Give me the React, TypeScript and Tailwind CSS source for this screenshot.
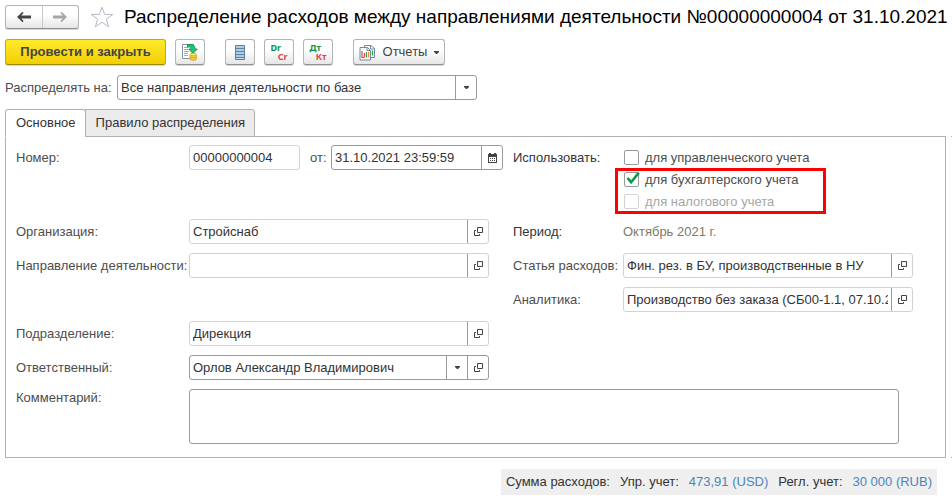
import { useState, type ReactNode } from "react";

// ─── Форма документа «Распределение расходов» ───

const TOOL_BUTTON =
  "flex h-[26px] items-center justify-center rounded-[3px] border border-[#b4b4b4] border-b-[#8f8f8f] bg-linear-to-b from-white from-40% to-[#e6e6e6] shadow-[0_1px_0_#d8d8d8]";

function ArrowIcon({ className, flip }: { className: string; flip?: boolean }) {
  return (
    <svg width="14" height="12" viewBox="0 0 14 12" className={className} aria-hidden="true">
      <path
        d={flip ? "M14 6 8.5 .8 7.4 1.9 9.8 4.6H0v2.8h9.8L7.4 10.1l1.1 1.1z" : "M0 6 5.5 .8l1.1 1.1L4.2 4.6H14v2.8H4.2l2.4 2.7-1.1 1.1z"}
        fill="currentColor"
      />
    </svg>
  );
}

function StarIcon() {
  return (
    <svg width="24" height="22" viewBox="0 0 24 22" aria-hidden="true">
      <path
        d="M12 1.2l2.6 7.2h8.2l-6.5 4.8 2.4 7.6L12 16.2l-6.7 4.6 2.4-7.6L1.2 8.4h8.2z"
        fill="#fff"
        stroke="#b3b9c1"
        strokeWidth="1"
      />
    </svg>
  );
}

function PostIcon() {
  return (
    <svg width="16" height="18" viewBox="0 0 16 18" aria-hidden="true">
      <path d="M.5 1.5h11v14H.5z" fill="#fff" stroke="#8195a8" />
      <path d="M2 4.5h4M2 6.5h4M2 8.5h5M2 10.5h4M2 12.5h4" stroke="#9aa9b7" />
      <path
        d="M5.5 1.5h3.2c3 0 4.3 1.6 4.3 4.5h2.3L11 10.6 6.7 6h2.5c0-1.5-.5-2-1.8-2H5.5z"
        fill="#20c56e"
        stroke="#078a45"
        strokeWidth=".8"
      />
      <path d="M8 11.5v4.6c0 1.6 6.4 1.6 6.4 0v-4.6z" fill="#f2d033" stroke="#c99c18" strokeWidth=".7" />
      <ellipse cx="11.2" cy="11.5" rx="3.2" ry="1.2" fill="#ffef8a" stroke="#c99c18" strokeWidth=".7" />
      <path d="M8 14c.6 1.2 5.8 1.2 6.4 0" fill="none" stroke="#c99c18" strokeWidth=".7" />
    </svg>
  );
}

function ListIcon() {
  return (
    <svg width="10" height="15" viewBox="0 0 10 15" aria-hidden="true">
      <path d="M.5.5h9v14h-9z" fill="#c6dcec" stroke="#5f7f99" />
      <path d="M1 3.5h8M1 6.5h8M1 9.5h8M1 12.5h8" stroke="#5f86a6" />
      <path d="M1 2h8M1 5h8M1 8h8M1 11h8" stroke="#9fbdd3" strokeWidth="1" />
    </svg>
  );
}

function ReportsIcon() {
  return (
    <svg width="17" height="17" viewBox="0 0 17 17" aria-hidden="true">
      <path d="M5.5 1.5h6.5l3.5 3v9h-10z" fill="#fff" stroke="#74889b" />
      <path d="M11.5 1.5v3.5h4" fill="none" stroke="#74889b" />
      <path d="M13.5 6.5v5" stroke="#2aa84f" strokeWidth="1.4" />
      <path d="M1 3.5h7.5l3 3v9.5H1z" fill="#fff" stroke="#74889b" />
      <path d="M8 3.5v3h3.5" fill="none" stroke="#74889b" />
      <path d="M3 7v6.5h2" fill="none" stroke="#e04437" strokeWidth="1.2" />
      <path d="M5.5 9v4.5" stroke="#e04437" strokeWidth="1.2" />
      <path d="M7.5 8v5.5" stroke="#3f9f4d" strokeWidth="1.2" />
      <path d="M9.6 8v5.5" stroke="#e98a2c" strokeWidth="1.2" />
    </svg>
  );
}

function CaretIcon() {
  return (
    <svg width="5" height="3" viewBox="0 0 5 3" aria-hidden="true">
      <path d="M0 0h5v1L3 3H2L0 1z" fill="#444" />
    </svg>
  );
}

function OpenIcon() {
  return (
    <svg width="9" height="9" viewBox="0 0 9 9" fill="none" stroke="#444" aria-hidden="true">
      <path d="M3.5.5h5v5h-5z" />
      <path d="M2 3.5H.5v5h5V7" />
    </svg>
  );
}

function CalendarIcon() {
  return (
    <svg width="9" height="10" viewBox="0 0 9 10" aria-hidden="true">
      <path d="M1 0h2v1h3V0h2v1h1v9H0V1h1z" fill="#444" />
      <path d="M1 4h7v5H1z" fill="#fff" />
      <path d="M2 5.5h1m1 0h1m1 0h1M2 7.5h1m1 0h1m1 0h1" stroke="#444" />
    </svg>
  );
}

function PairIcon({ top, bottom }: { top: string; bottom: string }) {
  return (
    <span className="flex w-[17px] flex-col font-['Noto_Sans',sans-serif] text-[9px] leading-[9px] font-bold">
      <span className="self-start text-[#0e9447]">{top}</span>
      <span className="self-end text-[#e04848]">{bottom}</span>
    </span>
  );
}

function FieldButton({ label, children }: { label: string; children: ReactNode }) {
  return (
    <button
      type="button"
      aria-label={label}
      className="flex w-[21px] shrink-0 items-center justify-center border-l border-[#9a9a9a]"
    >
      {children}
    </button>
  );
}

type FieldProps = {
  id: string;
  value: string;
  className: string;
  strong?: boolean;
  readOnly?: boolean;
  children?: ReactNode;
};

function Field({ id, value, className, strong, readOnly, children }: FieldProps) {
  return (
    <div
      className={`flex h-[25px] overflow-hidden rounded-[3px] border bg-white ${strong ? "border-[#9a9a9a]" : "border-[#d3d3d3]"} ${className}`}
    >
      <input
        id={id}
        defaultValue={value}
        readOnly={readOnly}
        className="w-0 min-w-0 flex-1 px-[3px] text-[#333] outline-none"
      />
      {children}
    </div>
  );
}

function Label({ htmlFor, className, children }: { htmlFor?: string; className: string; children: ReactNode }) {
  return (
    <label htmlFor={htmlFor} className={`shrink-0 leading-[25px] whitespace-nowrap text-[#4d4d4d] ${className}`}>
      {children}
    </label>
  );
}

function Check({ label, checked, disabled }: { label: string; checked?: boolean; disabled?: boolean }) {
  return (
    <label
      className={`relative flex gap-[6px] leading-[22px] whitespace-nowrap ${disabled ? "text-[#a6a6a6]" : "text-[#4d4d4d]"}`}
    >
      <input
        type="checkbox"
        defaultChecked={checked}
        disabled={disabled}
        className="peer mt-[3px] size-[15px] appearance-none rounded-[2px] border border-[#9a9a9a] bg-white disabled:border-[#d3d3d3]"
      />
      <svg
        width="14"
        height="13"
        viewBox="0 0 14 13"
        className="pointer-events-none absolute top-[3px] left-[2px] hidden peer-checked:block"
        aria-hidden="true"
      >
        <path d="M1.5 6l3.6 4.2L12.8.6" fill="none" stroke="#0b9a4a" strokeWidth="2.6" />
      </svg>
      {label}
    </label>
  );
}

const TABS = ["Основное", "Правило распределения"];

export default function App() {
  const [tab, setTab] = useState(0);

  return (
    <div className="overflow-x-hidden bg-white pt-[5px] pl-[5px] font-['Liberation_Sans',Arial,sans-serif] text-[13px] leading-4">
      <header className="flex h-6 items-center">
        <div className="flex h-6 w-[74px] shrink-0 rounded-[3px] border border-[#b4b4b4] border-b-[#8f8f8f] bg-linear-to-b from-white from-40% to-[#e6e6e6] shadow-[0_1px_0_#d8d8d8]">
          <button type="button" aria-label="Назад" className="flex flex-1 items-center justify-center">
            <ArrowIcon className="text-[#444]" />
          </button>
          <button
            type="button"
            aria-label="Вперед"
            className="flex flex-1 items-center justify-center border-l border-[#c8c8c8]"
          >
            <ArrowIcon flip className="text-[#a6a6a6]" />
          </button>
        </div>
        <button type="button" aria-label="В избранное" className="mr-[10px] ml-[11px] shrink-0">
          <StarIcon />
        </button>
        <h1 className="text-[19px] leading-6 whitespace-nowrap text-black">
          Распределение расходов между направлениями деятельности №00000000004 от 31.10.2021
        </h1>
      </header>

      <div className="mt-[10px] flex">
        <button
          type="button"
          className="h-[26px] w-[161px] rounded-[3px] border border-[#c9ab00] border-b-[#a08800] bg-linear-to-b from-[#ffe928] to-[#f3cf00] font-bold text-[#444] shadow-[0_1px_0_#d8d8d8]"
        >
          Провести и закрыть
        </button>
        <button type="button" aria-label="Провести" className={`${TOOL_BUTTON} ml-[9px] w-[30px]`}>
          <PostIcon />
        </button>
        <button type="button" aria-label="Список" className={`${TOOL_BUTTON} ml-5 w-[30px]`}>
          <ListIcon />
        </button>
        <button type="button" className={`${TOOL_BUTTON} ml-[9px] w-[30px]`}>
          <PairIcon top="Dr" bottom="Cr" />
        </button>
        <button type="button" className={`${TOOL_BUTTON} ml-[9px] w-[30px]`}>
          <PairIcon top="Дт" bottom="Кт" />
        </button>
        <button type="button" className={`${TOOL_BUTTON} ml-5 w-[92px] gap-[7px] text-[#444]`}>
          <ReportsIcon />
          Отчеты
          <CaretIcon />
        </button>
      </div>

      <div className="mt-[10px] flex">
        <Label htmlFor="target" className="w-[112px]">
          Распределять на:
        </Label>
        <div className="flex h-[25px] w-[360px] rounded-[3px] border border-[#9a9a9a]">
          <select id="target" className="min-w-0 flex-1 appearance-none px-[3px] text-[#333] outline-none">
            <option>Все направления деятельности по базе</option>
          </select>
          <span className="pointer-events-none flex w-[21px] items-center justify-center border-l border-[#9a9a9a]">
            <CaretIcon />
          </span>
        </div>
      </div>

      <div role="tablist" className="relative mt-[9px] -mb-px flex">
        {TABS.map((name, i) => (
          <button
            key={name}
            type="button"
            role="tab"
            aria-selected={tab === i}
            onClick={() => setTab(i)}
            className={`h-7 border pr-[9px] pl-[10px] text-[#333] ${i > 0 ? "-ml-px rounded-tr-[3px]" : "rounded-t-[3px]"} ${
              tab === i ? "border-[#b0b0b0] border-b-white bg-white" : "border-[#b0b0b0] bg-[#ebebeb]"
            }`}
          >
            {name}
          </button>
        ))}
      </div>

      <div className="flex gap-[5px]">
        <main className="flex-1 border border-[#b0b0b0] px-[10px] pt-2 pb-[13px]">
          <div className="grid grid-cols-[487px_minmax(0,1fr)] items-start gap-x-[10px] gap-y-[9px]">
            <div className="flex">
              <Label htmlFor="number" className="w-[173px]">
                Номер:
              </Label>
              <Field id="number" value="00000000004" readOnly className="w-[111px]" />
              <Label htmlFor="date" className="w-[31px] pl-[10px]">
                от:
              </Label>
              <Field id="date" value="31.10.2021 23:59:59" strong className="flex-1">
                <FieldButton label="Выбрать дату">
                  <CalendarIcon />
                </FieldButton>
              </Field>
            </div>
            <div className="flex h-[65px]">
              <span className="w-[110px] shrink-0 leading-[25px] text-[#333]">Использовать:</span>
              <div className="relative pt-[2px] pl-px">
                <Check label="для управленческого учета" />
                <Check label="для бухгалтерского учета" checked />
                <Check label="для налогового учета" disabled />
                <div className="pointer-events-none absolute top-[23px] -left-2 h-[46px] w-[211px] border-3 border-[#fe0000]" />
              </div>
            </div>

            <div className="flex">
              <Label htmlFor="org" className="w-[173px]">
                Организация:
              </Label>
              <Field id="org" value="Стройснаб" className="w-[300px]">
                <FieldButton label="Открыть организацию">
                  <OpenIcon />
                </FieldButton>
              </Field>
            </div>
            <div className="flex leading-[25px]">
              <span className="w-[110px] shrink-0 text-[#333]">Период:</span>
              <span className="text-[#7f7a66]">Октябрь 2021 г.</span>
            </div>

            <div className="flex">
              <Label htmlFor="activity" className="w-[173px]">
                Направление деятельности:
              </Label>
              <Field id="activity" value="" className="w-[300px]">
                <FieldButton label="Открыть направление">
                  <OpenIcon />
                </FieldButton>
              </Field>
            </div>
            <div className="flex">
              <Label htmlFor="item" className="w-[110px]">
                Статья расходов:
              </Label>
              <Field id="item" value="Фин. рез. в БУ, производственные в НУ" className="w-[290px]">
                <FieldButton label="Открыть статью">
                  <OpenIcon />
                </FieldButton>
              </Field>
            </div>

            <div className="col-start-2 flex">
              <Label htmlFor="analytics" className="w-[110px]">
                Аналитика:
              </Label>
              <Field id="analytics" value="Производство без заказа (СБ00-1.1, 07.10.2021)" className="w-[290px]">
                <FieldButton label="Открыть аналитику">
                  <OpenIcon />
                </FieldButton>
              </Field>
            </div>

            <div className="col-span-2 flex">
              <Label htmlFor="department" className="w-[173px]">
                Подразделение:
              </Label>
              <Field id="department" value="Дирекция" className="w-[300px]">
                <FieldButton label="Открыть подразделение">
                  <OpenIcon />
                </FieldButton>
              </Field>
            </div>

            <div className="col-span-2 flex">
              <Label htmlFor="responsible" className="w-[173px]">
                Ответственный:
              </Label>
              <Field id="responsible" value="Орлов Александр Владимирович" strong className="w-[300px]">
                <FieldButton label="Выбрать ответственного">
                  <CaretIcon />
                </FieldButton>
                <FieldButton label="Открыть ответственного">
                  <OpenIcon />
                </FieldButton>
              </Field>
            </div>

            <div className="col-span-2 flex">
              <label htmlFor="comment" className="w-[173px] shrink-0 leading-[18px] text-[#4d4d4d]">
                Комментарий:
              </label>
              <textarea
                id="comment"
                className="h-[55px] max-w-[710px] flex-1 resize-none rounded-[3px] border border-[#9a9a9a] px-[3px] outline-none"
              />
            </div>
          </div>
        </main>
        <div className="w-px border-y border-[#b0b0b0]" />
      </div>

      <footer className="mt-[11px] mr-[15px] flex justify-end">
        <div className="flex h-[26px] items-center gap-[10px] bg-[#efefef] px-[5px] text-[#333]">
          <span>Сумма расходов:</span>
          <span>Упр. учет:</span>
          <a href="#usd" className="text-[#4a86bd]">
            473,91 (USD)
          </a>
          <span>Регл. учет:</span>
          <a href="#rub" className="text-[#4a86bd]">
            30 000 (RUB)
          </a>
        </div>
      </footer>
    </div>
  );
}
